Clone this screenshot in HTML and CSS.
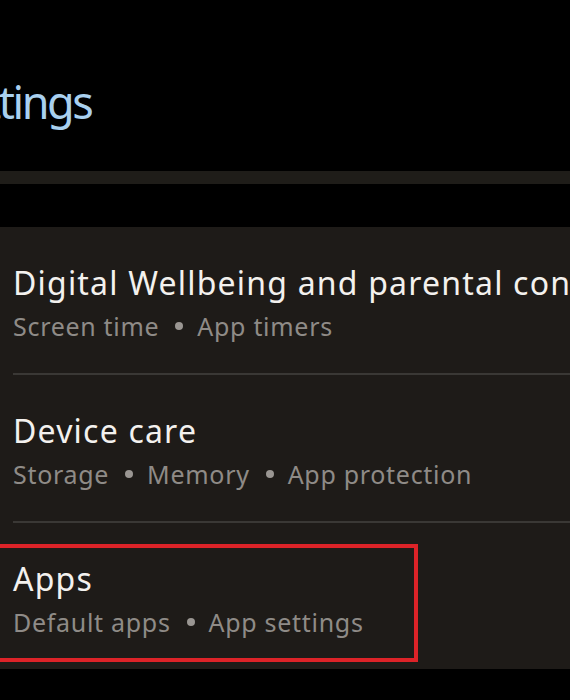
FILE: index.html
```html
<!DOCTYPE html>
<html lang="en">
<head>
<meta charset="utf-8">
<title>Settings</title>
<link rel="stylesheet" href="styles.css">
</head>
<body>
<div class="screen">
  <header class="header">
    <h1 class="title">Settings</h1>
  </header>
  <div class="strip"></div>
  <div class="gap"></div>
  <section class="card">
    <div class="item">
      <div class="item-title">Digital Wellbeing and parental controls</div>
      <div class="item-sub">Screen time<span class="dot"></span>App timers</div>
    </div>
    <div class="divider"></div>
    <div class="item">
      <div class="item-title">Device care</div>
      <div class="item-sub">Storage<span class="dot"></span>Memory<span class="dot"></span>App protection</div>
    </div>
    <div class="divider"></div>
    <div class="item item-highlight">
      <div class="item-title">Apps</div>
      <div class="item-sub">Default apps<span class="dot"></span>App settings</div>
      <div class="highlight-box"></div>
    </div>
  </section>
</div>
</body>
</html>
```

FILE: styles.css
```css
html, body {
  margin: 0;
  padding: 0;
  background: #000000;
}

.screen {
  width: 570px;
  height: 700px;
  overflow: hidden;
  background: #000000;
  font-family: "Noto Sans", "Open Sans", sans-serif;
}

.header {
  height: 171px;
  overflow: hidden;
}

.title {
  margin: 0 0 0 -60px;
  padding-top: 70px;
  font-size: 45px;
  line-height: 64px;
  letter-spacing: -2.5px;
  font-weight: 400;
  color: #a9d0ef;
  white-space: nowrap;
}

.strip {
  height: 13px;
  background: #1f1d19;
}

.gap {
  height: 43px;
}

.card {
  background: #1e1b18;
  overflow: hidden;
}

.item {
  position: relative;
  padding: 31px 0 29px 13px;
  white-space: nowrap;
}

.item-title {
  font-size: 32px;
  line-height: 50px;
  letter-spacing: 1.2px;
  color: #f3f1ee;
}

.item-sub {
  font-size: 25px;
  line-height: 36px;
  letter-spacing: 0.7px;
  color: #8f8b87;
}

.dot {
  display: inline-block;
  width: 8px;
  height: 8px;
  border-radius: 50%;
  background: #9a9692;
  margin: 0 14px 0 16px;
  vertical-align: 6px;
}

.divider {
  height: 2px;
  margin-left: 13px;
  background: #3a3835;
}

.highlight-box {
  position: absolute;
  left: -10px;
  top: 21px;
  width: 428px;
  height: 118px;
  box-sizing: border-box;
  border: 4px solid #dd2328;
}
```
